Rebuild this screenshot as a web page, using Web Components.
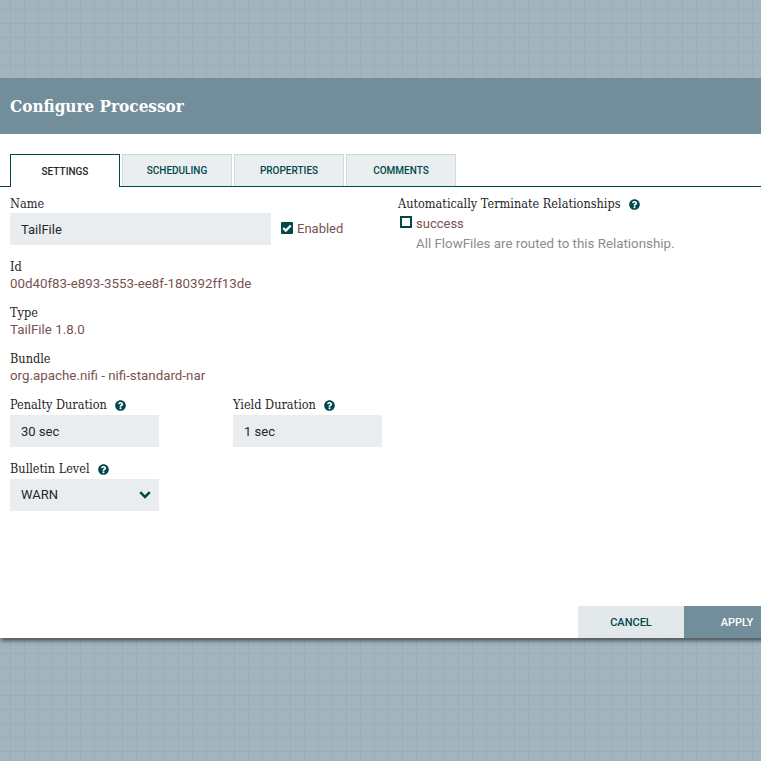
<!DOCTYPE html>
<html>
<head>
<meta charset="utf-8">
<title>Configure Processor</title>
<style>
    html, body { margin: 0; padding: 0; }
    body { font-family: 'Roboto', sans-serif; }
</style>
</head>
<body>
<nf-page>
    <nf-dialog heading="Configure Processor">
        <nf-tabs slot="tabs">
            <nf-tab active>Settings</nf-tab>
            <nf-tab>Scheduling</nf-tab>
            <nf-tab>Properties</nf-tab>
            <nf-tab>Comments</nf-tab>
        </nf-tabs>

        <nf-columns>
            <div slot="left">
                <nf-name-row>
                    <nf-field label="Name" style="--gap: 2px; --after: 13px">
                        <nf-input value="TailFile" width="261"></nf-input>
                    </nf-field>
                    <nf-check checked>Enabled</nf-check>
                </nf-name-row>
                <nf-field label="Id">00d40f83-e893-3553-ee8f-180392ff13de</nf-field>
                <nf-field label="Type">TailFile 1.8.0</nf-field>
                <nf-field label="Bundle">org.apache.nifi - nifi-standard-nar</nf-field>
                <nf-pair>
                    <nf-field label="Penalty Duration" help style="--gap: 3px; --after: 13px">
                        <nf-input value="30 sec" width="149"></nf-input>
                    </nf-field>
                    <nf-field label="Yield Duration" help style="--gap: 3px; --after: 13px">
                        <nf-input value="1 sec" width="149"></nf-input>
                    </nf-field>
                </nf-pair>
                <nf-field label="Bulletin Level" help style="--gap: 3px; --after: 0px">
                    <nf-input value="WARN" width="149" combo></nf-input>
                </nf-field>
            </div>
            <div slot="right">
                <nf-field label="Automatically Terminate Relationships" help style="--gap: 3px; --after: 0px">
                    <nf-relation name="success">All FlowFiles are routed to this Relationship.</nf-relation>
                </nf-field>
            </div>
        </nf-columns>

        <nf-button slot="footer">Cancel</nf-button>
        <nf-button slot="footer" primary>Apply</nf-button>
    </nf-dialog>
</nf-page>

<script>
// Icons als Inline-SVG
const HELP_ICON = `<svg viewBox="0 0 512 512" width="11" height="11" fill="#004849" aria-hidden="true"><path d="M504 256c0 136.997-111.043 248-248 248S8 392.997 8 256C8 119.083 119.043 8 256 8s248 111.083 248 248zM262.655 90c-54.497 0-89.255 22.957-116.549 63.758-3.536 5.286-2.353 12.415 2.715 16.258l34.699 26.31c5.205 3.947 12.621 3.008 16.665-2.122 17.864-22.658 30.113-35.797 57.303-35.797 20.429 0 45.698 13.148 45.698 32.958 0 14.976-12.363 22.667-32.534 33.976C247.128 238.528 216 254.941 216 296v4c0 6.627 5.373 12 12 12h56c6.627 0 12-5.373 12-12v-1.333c0-28.462 83.186-29.647 83.186-106.667 0-58.002-60.165-102-116.531-102zM256 338c-25.365 0-46 20.635-46 46 0 25.364 20.635 46 46 46s46-20.636 46-46c0-25.365-20.635-46-46-46z"/></svg>`;
const CHEVRON_ICON = `<svg viewBox="0 0 12 8" width="12" height="8" aria-hidden="true"><path d="M1.2 1.2L6 6l4.8-4.8" fill="none" stroke="#004849" stroke-width="2.5"/></svg>`;
const CHECKED_ICON = `<svg viewBox="0 0 12 12" width="12" height="12" aria-hidden="true"><rect width="12" height="12" rx="1" fill="#004849"/><path d="M2.2 6l2.6 2.6 5-5.1" fill="none" stroke="#fff" stroke-width="2.2"/></svg>`;
const UNCHECKED_ICON = `<svg viewBox="0 0 12 12" width="12" height="12" aria-hidden="true"><rect x="1" y="1" width="10" height="10" fill="none" stroke="#004849" stroke-width="2"/></svg>`;

class NfPage extends HTMLElement {
    constructor() {
        super();
        this.attachShadow({ mode: 'open' });
        this.shadowRoot.innerHTML = `
        <style>
            :host {
                display: block;
                width: 761px;
                height: 761px;
                padding-top: 78px;
                box-sizing: border-box;
                overflow: hidden;
                background-color: #a2b4bd;
                background-image:
                    linear-gradient(to right, #9badb7 1px, transparent 1px),
                    linear-gradient(to bottom, #9badb7 1px, transparent 1px);
                background-size: 14px 14px;
                background-position: 10px 9px;
            }
        </style>
        <slot></slot>`;
    }
}

class NfDialog extends HTMLElement {
    constructor() {
        super();
        this.attachShadow({ mode: 'open' });
        this.shadowRoot.innerHTML = `
        <style>
            :host {
                display: flex;
                flex-direction: column;
                width: 790px;
                height: 560px;
                background: #fff;
                box-shadow: 0 4px 4px -1px rgba(0, 0, 0, 0.5);
            }
            header {
                height: 56px;
                flex: none;
                display: flex;
                align-items: center;
                padding-left: 10px;
                background: #728e9b;
                color: #fff;
                font-family: 'DejaVu Serif Condensed', 'DejaVu Serif', serif;
                font-weight: bold;
                font-size: 17px;
            }
            .tabs { padding-top: 20px; flex: none; }
            .content { flex: 1; min-height: 0; }
            footer { display: flex; justify-content: flex-end; flex: none; }
        </style>
        <header id="title"></header>
        <div class="tabs"><slot name="tabs"></slot></div>
        <div class="content"><slot></slot></div>
        <footer><slot name="footer"></slot></footer>`;
        this.shadowRoot.querySelector('#title').textContent = this.getAttribute('heading');
    }
}

class NfTabs extends HTMLElement {
    constructor() {
        super();
        this.attachShadow({ mode: 'open' });
        this.shadowRoot.innerHTML = `
        <style>
            :host {
                display: flex;
                gap: 2px;
                height: 33px;
                box-sizing: border-box;
                padding-left: 10px;
                border-bottom: 1px solid #004849;
            }
        </style>
        <slot></slot>`;
    }
}

class NfTab extends HTMLElement {
    constructor() {
        super();
        this.attachShadow({ mode: 'open' });
        this.shadowRoot.innerHTML = `
        <style>
            :host {
                display: flex;
                align-items: center;
                justify-content: center;
                width: 110px;
                height: 32px;
                box-sizing: border-box;
                background: #eaeef0;
                border: 1px solid #cbd8dc;
                border-bottom: none;
                color: #004849;
                font: 500 10px 'Roboto', sans-serif;
                text-transform: uppercase;
            }
            :host([active]) {
                height: 33px;
                background: #fff;
                border-color: #004849;
                color: #262626;
                position: relative;
                z-index: 1;
            }
        </style>
        <slot></slot>`;
    }
}

class NfColumns extends HTMLElement {
    constructor() {
        super();
        this.attachShadow({ mode: 'open' });
        this.shadowRoot.innerHTML = `
        <style>
            :host {
                display: grid;
                grid-template-columns: 388px 1fr;
                padding: 8px 0 0 10px;
            }
        </style>
        <slot name="left"></slot>
        <slot name="right"></slot>`;
    }
}

class NfNameRow extends HTMLElement {
    constructor() {
        super();
        this.attachShadow({ mode: 'open' });
        this.shadowRoot.innerHTML = `
        <style>
            :host { display: flex; gap: 10px; align-items: flex-start; }
            ::slotted(nf-check) { margin-top: 25px; }
        </style>
        <slot></slot>`;
    }
}

class NfPair extends HTMLElement {
    constructor() {
        super();
        this.attachShadow({ mode: 'open' });
        this.shadowRoot.innerHTML = `
        <style>
            :host { display: grid; grid-template-columns: 223px 149px; }
        </style>
        <slot></slot>`;
    }
}

// Feld mit Serif-Beschriftung, optionalem Hilfe-Icon und Wert im Slot
class NfField extends HTMLElement {
    constructor() {
        super();
        this.attachShadow({ mode: 'open' });
        this.shadowRoot.innerHTML = `
        <style>
            :host {
                display: block;
                margin-bottom: var(--after, 11px);
                color: #775351;
                font: 400 13.33px/18px 'Roboto', sans-serif;
            }
            .label {
                display: flex;
                align-items: center;
                gap: 8px;
                height: 16px;
                box-sizing: border-box;
                padding-top: 2px;
                margin-bottom: var(--gap, 1px);
                color: #262626;
                font: 400 12.6px/14px 'DejaVu Serif Condensed', 'DejaVu Serif', serif;
            }
            svg { display: block; }
        </style>
        <div class="label"><span id="text"></span></div>
        <slot></slot>`;
        this.shadowRoot.querySelector('#text').textContent = this.getAttribute('label');
        if (this.hasAttribute('help')) {
            this.shadowRoot.querySelector('.label').insertAdjacentHTML('beforeend', HELP_ICON);
        }
    }
}

class NfInput extends HTMLElement {
    constructor() {
        super();
        this.attachShadow({ mode: 'open' });
        const combo = this.hasAttribute('combo');
        this.shadowRoot.innerHTML = `
        <style>
            :host {
                display: flex;
                align-items: center;
                justify-content: space-between;
                height: 32px;
                box-sizing: border-box;
                padding: 0 8px 0 11px;
                background: #eaedf0;
                color: #262626;
                font: 400 13px 'Roboto', sans-serif;
            }
            :host([combo]) #value { margin-top: -2px; }
            svg { display: block; }
        </style>
        <span id="value"></span>${combo ? CHEVRON_ICON : ''}`;
        this.style.width = this.getAttribute('width') + 'px';
        this.shadowRoot.querySelector('#value').textContent = this.getAttribute('value');
    }
}

class NfCheck extends HTMLElement {
    constructor() {
        super();
        this.attachShadow({ mode: 'open' });
        const icon = this.hasAttribute('checked') ? CHECKED_ICON : UNCHECKED_ICON;
        this.shadowRoot.innerHTML = `
        <style>
            :host {
                display: flex;
                align-items: center;
                gap: 4px;
                height: 18px;
                color: #775351;
                font: 400 13px/18px 'Roboto', sans-serif;
            }
            svg { display: block; margin-top: -3px; }
        </style>
        ${icon}<slot></slot>`;
    }
}

class NfRelation extends HTMLElement {
    constructor() {
        super();
        this.attachShadow({ mode: 'open' });
        this.shadowRoot.innerHTML = `
        <style>
            :host {
                display: grid;
                grid-template-columns: 12px 1fr;
                column-gap: 4px;
                padding-left: 2px;
                font: 400 13px/20px 'Roboto', sans-serif;
                color: #775351;
            }
            svg { display: block; margin-top: 2px; }
            .desc { grid-column: 2; color: #8c8c8c; font-size: 13.33px; }
        </style>
        ${UNCHECKED_ICON}<span id="name"></span>
        <div class="desc"><slot></slot></div>`;
        this.shadowRoot.querySelector('#name').textContent = this.getAttribute('name');
    }
}

class NfButton extends HTMLElement {
    constructor() {
        super();
        this.attachShadow({ mode: 'open' });
        this.shadowRoot.innerHTML = `
        <style>
            :host {
                display: flex;
                align-items: center;
                justify-content: center;
                width: 106px;
                height: 32px;
                background: #e3e8eb;
                color: #004849;
                font: 500 11px 'Roboto', sans-serif;
                text-transform: uppercase;
                cursor: pointer;
            }
            :host([primary]) { background: #728e9b; color: #fff; }
        </style>
        <slot></slot>`;
    }
}

customElements.define('nf-page', NfPage);
customElements.define('nf-dialog', NfDialog);
customElements.define('nf-tabs', NfTabs);
customElements.define('nf-tab', NfTab);
customElements.define('nf-columns', NfColumns);
customElements.define('nf-name-row', NfNameRow);
customElements.define('nf-pair', NfPair);
customElements.define('nf-field', NfField);
customElements.define('nf-input', NfInput);
customElements.define('nf-check', NfCheck);
customElements.define('nf-relation', NfRelation);
customElements.define('nf-button', NfButton);
</script>
</body>
</html>
